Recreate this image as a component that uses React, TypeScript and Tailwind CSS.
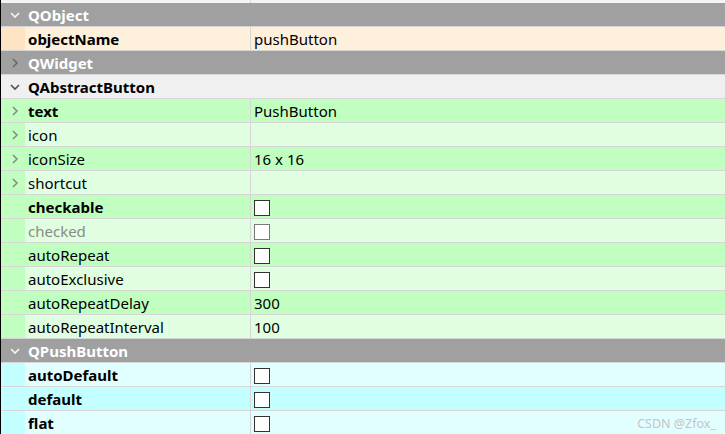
import React from "react";

type Chev = "down" | "right" | null;

const Chevron = ({ dir, color }: { dir: Chev; color: string }) => {
  if (!dir) return null;
  if (dir === "down")
    return (
      <svg width="12" height="12" viewBox="0 0 12 12" className="block">
        <path d="M2 4 L6 8 L10 4" fill="none" stroke={color} strokeWidth="1.6" />
      </svg>
    );
  return (
    <svg width="12" height="12" viewBox="0 0 12 12" className="block">
      <path d="M4 2 L8 6 L4 10" fill="none" stroke={color} strokeWidth="1.6" />
    </svg>
  );
};

const Header = ({ name, dir, light }: { name: string; dir: Chev; light?: boolean }) => (
  <div
    className={`flex h-[24px] items-center border-b border-[#d6d6d6] ${light ? "bg-[#f0f0f0] text-black" : "bg-[#a0a0a0] text-white"}`}
  >
    <div className="flex w-[27px] items-center justify-center pl-[1px]">
      <Chevron dir={dir} color={light ? "#505050" : dir === "right" ? "#6a6a6a" : "#f4f4f4"} />
    </div>
    <span className="pt-[2px] font-bold">{name}</span>
  </div>
);

const Box = ({ disabled }: { disabled?: boolean }) => (
  <div
    className={`h-[16px] w-[16px] bg-white border-[1.5px] ${disabled ? "border-[#7a7a7a]" : "border-[#333333]"}`}
  />
);

type RowProps = {
  name: string;
  value?: React.ReactNode;
  bold?: boolean;
  dim?: boolean;
  dir?: Chev;
  strip: string;
  bg: string;
};

const Row = ({ name, value, bold, dim, dir = null, strip, bg }: RowProps) => (
  <div className={`flex h-[24px] border-b border-[#d6d6d6] ${bg}`}>
    <div className={`flex w-[24px] items-center justify-center pl-[3px] ${strip}`}>
      <Chevron dir={dir} color="#8c8c8c" />
    </div>
    <div
      className={`flex w-[225px] items-center pl-[3px] pt-[2px] ${bold ? "font-bold" : ""} ${dim ? "text-[#8a8a8a]" : "text-black"}`}
    >
      {name}
    </div>
    <div className="w-[1px] bg-[#d6d6d6]" />
    <div className="flex flex-1 items-center pl-[3px] pt-[2px]">{value}</div>
  </div>
);

const G1 = "bg-[#c0ffc0]";
const G2 = "bg-[#e0ffe0]";
const B1 = "bg-[#c4ffff]";
const B2 = "bg-[#e2ffff]";

export default function App() {
  return (
    <div
      className="relative h-[434px] w-[725px] overflow-hidden border-l border-black bg-white text-[15px] leading-none"
      style={{ fontFamily: '"Noto Sans", "Open Sans", sans-serif' }}
    >
      <div className="flex h-[3px] bg-[#f4f4f4]">
        <div className="w-[249px]" />
        <div className="w-[1px] bg-[#d6d6d6]" />
      </div>
      <Header name="QObject" dir="down" />
      <Row name="objectName" bold strip="bg-[#ffe4c4]" bg="bg-[#fff0dc]" value="pushButton" />
      <Header name="QWidget" dir="right" />
      <Header name="QAbstractButton" dir="down" light />
      <Row name="text" bold dir="right" strip={G1} bg={G1} value="PushButton" />
      <Row name="icon" dir="right" strip={G1} bg={G2} />
      <Row name="iconSize" dir="right" strip={G1} bg={G1} value="16 x 16" />
      <Row name="shortcut" dir="right" strip={G1} bg={G2} />
      <Row name="checkable" bold strip={G1} bg={G1} value={<Box />} />
      <Row name="checked" dim strip={G1} bg={G2} value={<Box disabled />} />
      <Row name="autoRepeat" strip={G1} bg={G1} value={<Box />} />
      <Row name="autoExclusive" strip={G1} bg={G2} value={<Box />} />
      <Row name="autoRepeatDelay" strip={G1} bg={G1} value="300" />
      <Row name="autoRepeatInterval" strip={G1} bg={G2} value="100" />
      <Header name="QPushButton" dir="down" />
      <Row name="autoDefault" bold strip={B1} bg={B2} value={<Box />} />
      <Row name="default" bold strip={B1} bg={B1} value={<Box />} />
      <Row name="flat" bold strip={B1} bg={B2} value={<Box />} />
      <div
        className="absolute bottom-[4px] right-[9px] text-[12.5px] text-[#c4c4c4]"
        style={{ fontFamily: '"Noto Sans", sans-serif' }}
      >
        CSDN @Zfox_
      </div>
    </div>
  );
}
